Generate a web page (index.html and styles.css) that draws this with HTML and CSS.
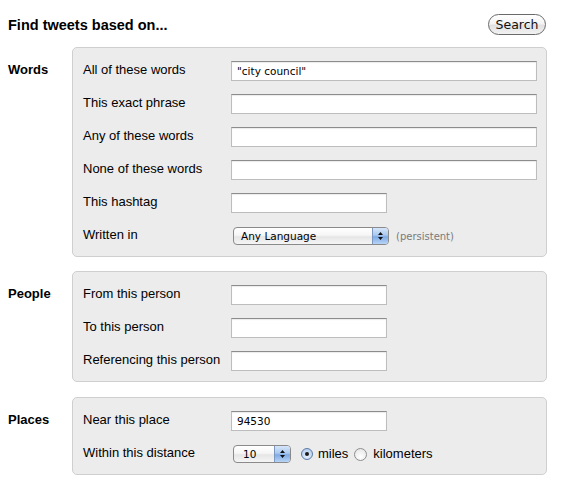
FILE: index.html
```html
<!DOCTYPE html>
<html>
<head>
<meta charset="utf-8">
<link rel="stylesheet" href="styles.css">
</head>
<body>
<div class="page">
  <div class="header">
    <h1 class="title">Find tweets based on...</h1>
    <button class="btn">Search</button>
  </div>

  <div class="section sec-words">
    <div class="sec-label">Words</div>
    <div class="box">
      <div class="row"><label>All of these words</label><div class="input wide">"city council"</div></div>
      <div class="row"><label>This exact phrase</label><div class="input wide"></div></div>
      <div class="row"><label>Any of these words</label><div class="input wide"></div></div>
      <div class="row"><label>None of these words</label><div class="input wide"></div></div>
      <div class="row"><label>This hashtag</label><div class="input short"></div></div>
      <div class="row"><label>Written in</label>
        <div class="ctrl">
          <div class="select lang"><span class="val">Any Language</span><span class="arrows"><svg width="7" height="10" viewBox="0 0 7 10"><path d="M3.5 1 L6 4 L1 4 Z M3.5 9 L6 6 L1 6 Z" fill="#111"/></svg></span></div>
          <span class="note">(persistent)</span>
        </div>
      </div>
    </div>
  </div>

  <div class="section sec-people">
    <div class="sec-label">People</div>
    <div class="box">
      <div class="row"><label>From this person</label><div class="input short"></div></div>
      <div class="row"><label>To this person</label><div class="input short"></div></div>
      <div class="row"><label>Referencing this person</label><div class="input short"></div></div>
    </div>
  </div>

  <div class="section sec-places">
    <div class="sec-label">Places</div>
    <div class="box">
      <div class="row"><label>Near this place</label><div class="input short">94530</div></div>
      <div class="row"><label>Within this distance</label>
        <div class="ctrl">
          <div class="select dist"><span class="val">10</span><span class="arrows"><svg width="7" height="10" viewBox="0 0 7 10"><path d="M3.5 1 L6 4 L1 4 Z M3.5 9 L6 6 L1 6 Z" fill="#111"/></svg></span></div>
          <span class="radio on"></span><span class="rtext">miles</span>
          <span class="radio off"></span><span class="rtext">kilometers</span>
        </div>
      </div>
    </div>
  </div>
</div>
</body>
</html>
```

FILE: styles.css
```css
html, body {
  margin: 0;
  padding: 0;
  background: #fff;
}
body {
  font-family: "Liberation Sans", Arial, sans-serif;
  font-size: 13px;
  color: #000;
}
.page {
  width: 539px;
  padding-left: 8px;
  padding-top: 14px;
}
.header {
  display: flex;
  justify-content: space-between;
  align-items: center;
  height: 21px;
}
.title {
  margin: 0;
  font-size: 14.5px;
  font-weight: bold;
  line-height: 21px;
  padding-top: 1px;
}
.btn {
  width: 58px;
  height: 21px;
  margin-right: 1px;
  padding: 0;
  border: 1px solid #6a6a6a;
  border-radius: 11px;
  background: linear-gradient(#ffffff 0%, #f4f4f4 45%, #e2e2e2 55%, #f2f2f2 100%);
  font-family: "DejaVu Sans", sans-serif;
  font-size: 12.5px;
  color: #111;
  line-height: 19px;
}
.section {
  display: grid;
  grid-template-columns: 64px 1fr;
}
.sec-words { margin-top: 12px; }
.sec-people { margin-top: 14px; }
.sec-places { margin-top: 15px; }
.sec-label {
  font-weight: bold;
  padding-top: 13px;
  line-height: 20px;
}
.box {
  background: #ececec;
  border: 1px solid #cfcfcf;
  border-radius: 5px;
  padding: 13px 9px 10px 10px;
  display: flex;
  flex-direction: column;
  gap: 13px;
}
.row {
  display: grid;
  grid-template-columns: 148px 1fr;
  height: 20px;
  align-items: center;
}
.row label {
  line-height: 20px;
  margin-top: -2px;
}
.input {
  box-sizing: border-box;
  height: 20px;
  background: #fff;
  border: 1px solid #bdbdbd;
  border-top-color: #8c8c8c;
  box-shadow: inset 0 1px 1px rgba(0,0,0,0.08);
  font-family: "DejaVu Sans", sans-serif;
  font-size: 10.5px;
  line-height: 18px;
  padding-left: 5px;
}
.input.wide { width: 306px; }
.input.short { width: 156px; }
.ctrl {
  display: flex;
  align-items: center;
  height: 20px;
}
.select {
  box-sizing: border-box;
  height: 18px;
  margin-left: 2px;
  display: flex;
  border: 1px solid #8a8a8a;
  border-radius: 4px;
  background: linear-gradient(#ffffff 0%, #f6f6f6 45%, #e6e6e6 55%, #f5f5f5 100%);
  overflow: hidden;
  font-family: "DejaVu Sans", sans-serif;
  font-size: 10.5px;
  line-height: 16px;
}
.select .val {
  flex: 1;
  padding-left: 7px;
}
.select .arrows {
  width: 15px;
  display: flex;
  align-items: center;
  justify-content: center;
  border-left: 1px solid #7d98c0;
  background: linear-gradient(#d6e6fa 0%, #a9c8ee 45%, #7eaae6 55%, #b8d4f6 100%);
}
.select.lang { width: 156px; }
.select.dist { width: 58px; }
.select.dist .val { padding-left: 9px; }
.note {
  margin-left: 7px;
  font-family: "DejaVu Sans", sans-serif;
  font-size: 10px;
  color: #7a7a7a;
}
.radio {
  box-sizing: border-box;
  width: 12px;
  height: 12px;
  border-radius: 50%;
  border: 1px solid #8e8e8e;
  background: radial-gradient(circle at 50% 70%, #ffffff 0%, #e2e2e2 100%);
  margin-right: 5px;
  position: relative;
}
.radio.on {
  margin-left: 10px;
  border-color: #5c7aa5;
  background: radial-gradient(circle at 50% 70%, #e8f1fc 0%, #a7c5ec 100%);
}
.radio.off {
  width: 13px;
  height: 13px;
  margin-left: 6px;
  margin-right: 6px;
}
.radio.on::after {
  content: "";
  position: absolute;
  left: 3px;
  top: 3px;
  width: 4px;
  height: 4px;
  border-radius: 50%;
  background: #1a1a1a;
}
.rtext {
  line-height: 20px;
}
```
